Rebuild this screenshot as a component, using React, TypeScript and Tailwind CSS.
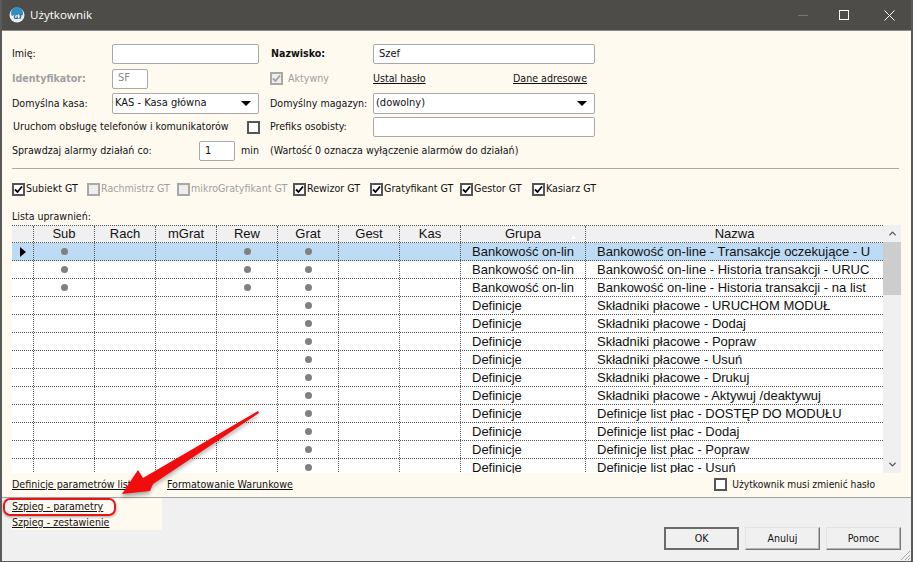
import React from "react";
import { ChevronUp, ChevronDown } from "lucide-react";

const COLS = "grid-cols-[22px_61px_61px_61px_61px_61px_61px_61px_125px_298px]";

const rows: [boolean, boolean, string, string][] = [
  [true, true, "Bankowość on-lin", "Bankowość on-line - Transakcje oczekujące - U"],
  [true, true, "Bankowość on-lin", "Bankowość on-line - Historia transakcji - URUC"],
  [true, true, "Bankowość on-lin", "Bankowość on-line - Historia transakcji - na list"],
  [false, false, "Definicje", "Składniki płacowe - URUCHOM MODUŁ"],
  [false, false, "Definicje", "Składniki płacowe - Dodaj"],
  [false, false, "Definicje", "Składniki płacowe - Popraw"],
  [false, false, "Definicje", "Składniki płacowe - Usuń"],
  [false, false, "Definicje", "Składniki płacowe - Drukuj"],
  [false, false, "Definicje", "Składniki płacowe - Aktywuj /deaktywuj"],
  [false, false, "Definicje", "Definicje list płac - DOSTĘP DO MODUŁU"],
  [false, false, "Definicje", "Definicje list płac - Dodaj"],
  [false, false, "Definicje", "Definicje list płac - Popraw"],
  [false, false, "Definicje", "Definicje list płac - Usuń"],
];

const headers = ["", "Sub", "Rach", "mGrat", "Rew", "Grat", "Gest", "Kas", "Grupa", "Nazwa"];

function Check({ checked, disabled }: { checked?: boolean; disabled?: boolean }) {
  return (
    <span
      className={`flex h-[13px] w-[13px] shrink-0 items-center justify-center border-2 ${
        disabled ? "border-[#a8a8a8] bg-[#eeeeee]" : "border-[#555555] bg-white"
      }`}
    >
      {checked && (
        <svg width="9" height="9" viewBox="0 0 9 9">
          <path d="M1 4.5 L3.5 7 L8 1.5" fill="none" stroke={disabled ? "#a0a0a0" : "#000"} strokeWidth="1.8" />
        </svg>
      )}
    </span>
  );
}

function Product({ label, checked, w }: { label: string; checked?: boolean; w: string }) {
  return (
    <label className={`flex items-center gap-px ${w} ${checked ? "text-[#111]" : "text-[#a0a0a0]"}`}>
      <Check checked={checked} disabled={!checked} />
      <span className="whitespace-nowrap">{label}</span>
    </label>
  );
}

function Field({ w, children }: { w: string; children?: React.ReactNode }) {
  return (
    <div className={`flex h-[20px] ${w} items-center rounded-[2px] border border-[#a9a9a9] bg-white px-[5px] text-[11px] text-[#111]`}>
      {children}
    </div>
  );
}

function Select({ w, children }: { w: string; children: React.ReactNode }) {
  return (
    <div className={`flex h-[21px] ${w} items-center justify-between rounded-[2px] border border-[#a9a9a9] bg-white pl-[2px] pr-[7px] text-[11px] text-[#111]`}>
      <span>{children}</span>
      <span className="h-0 w-0 border-x-[5px] border-t-[5px] border-x-transparent border-t-black" />
    </div>
  );
}

function Button({ children, main }: { children: React.ReactNode; main?: boolean }) {
  return (
    <button
      className={`h-[23px] w-[75px] bg-[#f0f0f0] text-[#111] ${
        main
          ? "border-2 border-[#6b6b6b]"
          : "border border-b-[#777] border-r-[#777] border-t-[#e4e4e4] border-l-[#e4e4e4] shadow-[inset_-1px_-1px_0_#b5b5b5]"
      }`}
    >
      {children}
    </button>
  );
}

export default function App() {
  return (
    <div className="relative flex h-[562px] w-[913px] flex-col overflow-hidden border-x-2 border-b border-[#5a5a58] bg-[#fffaf0] font-['DejaVu_Sans_Condensed','Liberation_Sans',sans-serif] text-[10.6px] text-[#111]">
      {/* Title bar */}
      <div className="-mx-[2px] flex h-[31px] shrink-0 items-center border-b border-[#8a8a88] bg-[#4d4c49] pl-[9px] text-white">
        <svg width="16" height="16" viewBox="0 0 16 16">
          <circle cx="8" cy="8" r="7.5" fill="#e8eef3" />
          <circle cx="8" cy="6" r="6" fill="#2f8fc4" />
          <path d="M1.5 10 Q8 5 14.5 8 Q8 14 1.5 10Z" fill="#f4f7f9" />
          <text x="4.5" y="12" fontSize="6.5" fontWeight="700" fontStyle="italic" fill="#1a5f8a">GT</text>
        </svg>
        <span className="ml-[5px] font-['Open_Sans',sans-serif] text-[11.6px]">Użytkownik</span>
        <div className="ml-auto flex h-full items-center">
          <span className="mr-[31px] h-px w-[10px] bg-[#77766f]" />
          <span className="mr-[35px] h-[10px] w-[10px] border border-white" />
          <svg className="mr-[18px]" width="11" height="11" viewBox="0 0 11 11">
            <path d="M0.5 0.5 L10.5 10.5 M10.5 0.5 L0.5 10.5" stroke="#fff" strokeWidth="1" />
          </svg>
        </div>
      </div>

      {/* Form */}
      <div className="flex min-h-0 flex-1 flex-col px-[10px]">
        <div className="mt-[13px] flex h-[20px] items-center">
          <span className="w-[100px]">Imię:</span>
          <Field w="w-[147px]" />
          <span className="ml-[12px] w-[102px] font-bold">Nazwisko:</span>
          <Field w="w-[222px]">Szef</Field>
        </div>

        <div className="mt-[4px] flex h-[20px] items-center pt-[1px]">
          <span className="w-[100px] font-bold text-[#a0a0a0]">Identyfikator:</span>
          <Field w="w-[36px] text-[#888]">SF</Field>
          <span className="ml-[122px] flex w-[103px] items-center gap-[5px] text-[#a0a0a0]">
            <Check checked disabled />
            Aktywny
          </span>
          <span className="w-[140px] underline">Ustal hasło</span>
          <span className="underline">Dane adresowe</span>
        </div>

        <div className="mt-[5px] flex h-[21px] items-center">
          <span className="w-[100px]">Domyślna kasa:</span>
          <Select w="w-[147px]">KAS - Kasa główna</Select>
          <span className="ml-[11px] w-[103px]">Domyślny magazyn:</span>
          <Select w="w-[222px]">(dowolny)</Select>
        </div>

        <div className="mt-[3px] flex h-[20px] items-center">
          <span className="ml-[1px] w-[234px]">Uruchom obsługę telefonów i komunikatorów</span>
          <Check />
          <span className="ml-[10px] w-[103px]">Prefiks osobisty:</span>
          <Field w="w-[222px]" />
        </div>

        <div className="mt-[4px] flex h-[20px] items-center">
          <span className="w-[187px]">Sprawdzaj alarmy działań co:</span>
          <Field w="w-[36px]">1</Field>
          <span className="ml-[6px] w-[29px]">min</span>
          <span>(Wartość 0 oznacza wyłączenie alarmów do działań)</span>
        </div>

        <div className="mr-[2px] mt-[7px] h-px shrink-0 bg-[#a9a9a9]" />

        <div className="mt-[13px] flex h-[14px] items-center">
          <Product label="Subiekt GT" checked w="w-[75px]" />
          <Product label="Rachmistrz GT" w="w-[90px]" />
          <Product label="mikroGratyfikant GT" w="w-[116px]" />
          <Product label="Rewizor GT" checked w="w-[77px]" />
          <Product label="Gratyfikant GT" checked w="w-[90px]" />
          <Product label="Gestor GT" checked w="w-[72px]" />
          <Product label="Kasiarz GT" checked w="w-[70px]" />
        </div>

        <div className="mt-[13px] h-[14px] leading-[14px]">Lista uprawnień:</div>

        {/* Grid with permissions */}
        <div className="mt-[2px] flex h-[248px] shrink-0">
          <div className="w-[872px] overflow-hidden font-['Liberation_Sans',sans-serif] text-[13px]">
            <div className={`grid h-[18px] ${COLS} border-y border-dotted border-[#555] bg-[#f0f0f0] text-center leading-[16px]`}>
              {headers.map((h, i) => (
                <div key={i} className="relative border-r border-dotted border-[#555]">
                  {h}
                  {h === "Grupa" && <span className="absolute right-[8px] top-[3px] text-[7px] text-white">▲</span>}
                </div>
              ))}
            </div>
            {rows.map((r, i) => (
              <div
                key={i}
                className={`grid h-[18px] ${COLS} border-b border-dotted border-[#555] leading-[17px] ${i === 0 ? "bg-[#bddbf5]" : "bg-white"}`}
              >
                <div className="flex items-center justify-center border-r border-dotted border-[#555]">
                  {i === 0 && <span className="h-0 w-0 border-y-[5px] border-l-[6px] border-y-transparent border-l-black" />}
                </div>
                {[r[0], false, false, r[1], true, false, false].map((dot, c) => (
                  <div key={c} className="flex items-center justify-center border-r border-dotted border-[#555]">
                    {dot && <span className="h-[7px] w-[7px] rounded-full bg-[#808080]" />}
                  </div>
                ))}
                <div className="overflow-hidden whitespace-nowrap border-r border-dotted border-[#555] pl-[11px]">{r[2]}</div>
                <div className="overflow-hidden whitespace-nowrap border-r border-dotted border-[#555] pl-[11px]">{r[3]}</div>
              </div>
            ))}
          </div>
          {/* Scrollbar */}
          <div className="flex w-[18px] flex-col items-center justify-between bg-[#f0f0f0]">
            <div className="flex h-[17px] items-center justify-center text-[#555]">
              <ChevronUp size={11} strokeWidth={3} />
            </div>
            <div className="h-[53px] w-full bg-[#cdcdcd]" />
            <div className="mt-auto flex h-[17px] items-center justify-center text-[#555]">
              <ChevronDown size={11} strokeWidth={3} />
            </div>
          </div>
        </div>

        <div className="flex flex-1 items-center pb-[1px]">
          <span className="w-[155px] whitespace-nowrap underline">Definicje parametrów listy</span>
          <span className="underline">Formatowanie Warunkowe</span>
          <span className="ml-auto mr-[26px] flex items-center gap-[5px] text-[10.2px]">
            <Check />
            Użytkownik musi zmienić hasło
          </span>
        </div>
      </div>

      {/* Footer */}
      <div className="-mx-[2px] flex h-[64px] shrink-0 items-start justify-between border-t border-[#a0a0a0] bg-[#f0f0f0] pl-[12px] pr-[12px]">
        <div className="flex h-[32px] w-[150px] flex-col bg-[#fffaf0] leading-[16px]">
          <span className="underline">Szpieg - parametry</span>
          <span className="underline">Szpieg - zestawienie</span>
        </div>
        <div className="mt-[29px] flex gap-[6px]">
          <Button main>OK</Button>
          <Button>Anuluj</Button>
          <Button>Pomoc</Button>
        </div>
      </div>

      {/* Red annotation */}
      <div className="absolute left-[1px] top-[498px] h-[18px] w-[113px] rounded-[7px] border-2 border-[#e8141c] shadow-[0_1px_3px_rgba(0,0,0,0.35)]" />
      <svg
        className="absolute -left-[2px] top-0 drop-shadow-[-1px_3px_2px_rgba(0,0,0,0.35)]"
        width="913"
        height="562"
        viewBox="0 0 913 562"
      >
        <polygon points="258,411 259,413 153,484 150,491 122,494 138,470 143,478" fill="#f10d0d" />
      </svg>

      {/* Resize grip */}
      <svg className="absolute bottom-0 right-0" width="12" height="12" viewBox="0 0 12 12">
        <path d="M11 2 L2 11 M11 6 L6 11 M11 9 L9 11" stroke="#a8a8a8" strokeWidth="1" />
      </svg>
    </div>
  );
}
